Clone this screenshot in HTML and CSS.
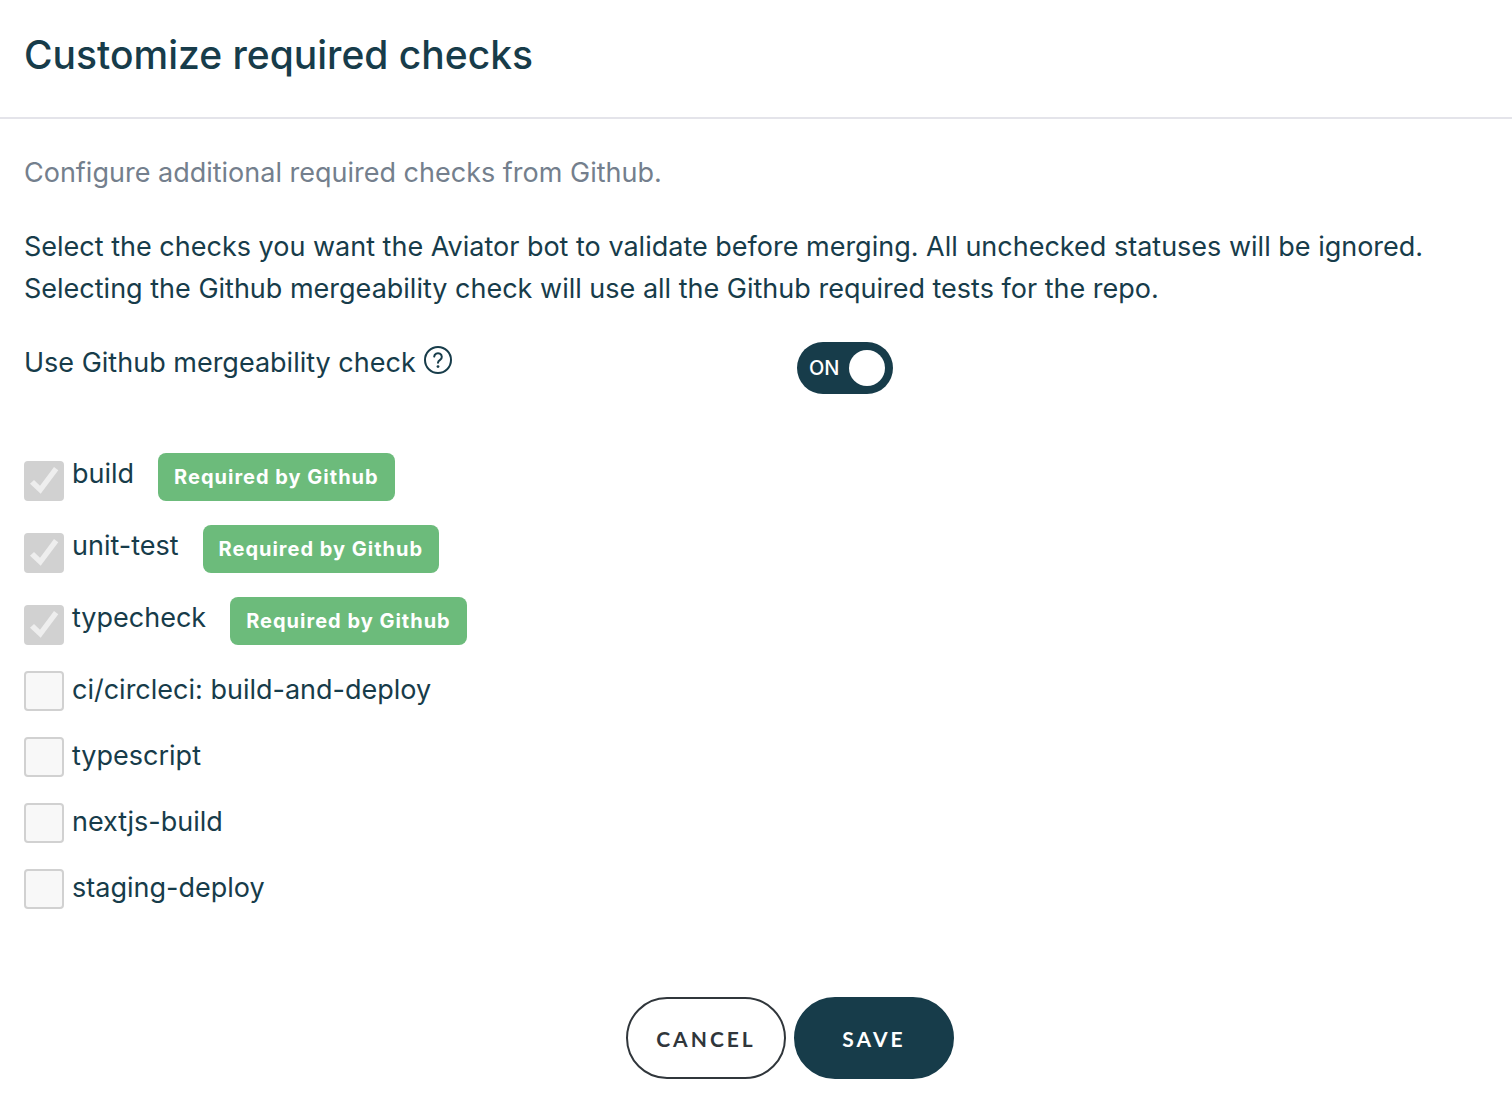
FILE: index.html
```html
<!DOCTYPE html>
<html lang="en">
<head>
<meta charset="utf-8">
<meta name="viewport" content="width=device-width, initial-scale=1">
<title>Customize required checks</title>
<link rel="stylesheet" href="styles.css">
</head>
<body>
<main>
  <header class="header">
    <h1>Customize required checks</h1>
  </header>
  <form class="content">
    <p class="hint">Configure additional required checks from Github.</p>
    <p class="intro">Select the checks you want the Aviator bot to validate before merging. All unchecked statuses will be ignored. Selecting the Github mergeability check will use all the Github required tests for the repo.</p>
    <div class="setting">
      <div class="setting-name">
        <label for="mergeability">Use Github mergeability check</label>
        <svg class="help" viewBox="0 0 28 28" aria-hidden="true">
          <circle cx="14" cy="14" r="13"/>
          <path d="M10.2 10.6a3.8 3.6 0 1 1 5.9 3.2c-1.4.9-2.1 1.5-2.1 3"/>
          <circle class="dot" cx="14" cy="20.6" r="1.4"/>
        </svg>
      </div>
      <label class="switch">
        <input type="checkbox" id="mergeability" checked>
        <span class="switch-text">ON</span>
        <span class="knob"></span>
      </label>
    </div>
    <ul class="checks">
      <li class="required"><input type="checkbox" id="c1" checked disabled><label for="c1">build</label><span class="badge">Required by Github</span></li>
      <li class="required"><input type="checkbox" id="c2" checked disabled><label for="c2">unit-test</label><span class="badge">Required by Github</span></li>
      <li class="required"><input type="checkbox" id="c3" checked disabled><label for="c3">typecheck</label><span class="badge">Required by Github</span></li>
      <li><input type="checkbox" id="c4"><label for="c4">ci/circleci: build-and-deploy</label></li>
      <li><input type="checkbox" id="c5"><label for="c5">typescript</label></li>
      <li><input type="checkbox" id="c6"><label for="c6">nextjs-build</label></li>
      <li><input type="checkbox" id="c7"><label for="c7">staging-deploy</label></li>
    </ul>
    <div class="actions">
      <button type="button" class="cancel">CANCEL</button>
      <button type="submit" class="save">SAVE</button>
    </div>
  </form>
</main>
</body>
</html>
```

FILE: styles.css
```css
* { box-sizing: border-box; }
body {
  margin: 0;
  background: #fff;
  color: #173c4a;
  font: 27px/42px Inter, sans-serif;
}
h1, p, ul { margin: 0; padding: 0; }
.header {
  padding: 24px 24px 32px;
  border-bottom: 2px solid #e4e4ea;
}
h1 {
  font-size: 39px;
  line-height: 61px;
  font-weight: 500;
}
.content { padding: 33px 24px 21px; }
.hint { color: #747f8d; margin-bottom: 32px; }
.intro { margin-bottom: 32px; }
.setting {
  display: grid;
  grid-template-columns: 773fr 691fr;
  align-items: start;
}
.setting-name { display: flex; gap: 8px; }
.help {
  width: 28px;
  height: 28px;
  margin-top: 4px;
  fill: none;
  stroke: currentColor;
  stroke-width: 2;
  stroke-linecap: round;
}
.help .dot { fill: currentColor; stroke: none; }
.switch {
  display: flex;
  align-items: center;
  justify-content: space-between;
  width: 96px;
  height: 52px;
  padding: 0 8px 0 12px;
  border-radius: 26px;
  background: #173c4a;
  color: #fff;
}
.switch input { position: absolute; opacity: 0; }
.switch-text { font-size: 20px; font-weight: 500; }
.knob { width: 36px; height: 36px; border-radius: 50%; background: #fff; }
.checks {
  display: grid;
  gap: 24px;
  margin-top: 59px;
  list-style: none;
}
.checks li { display: flex; align-items: flex-start; gap: 8px; }
.checks input {
  appearance: none;
  flex: none;
  width: 40px;
  height: 40px;
  margin: 2px 0 0;
  border: 2px solid #d1d1d1;
  border-radius: 4px;
  background: #f8f8f8;
}
.checks .required input {
  margin-top: 8px;
  background: #d1d1d1 url("data:image/svg+xml,%3Csvg xmlns='http://www.w3.org/2000/svg' viewBox='0 0 40 40'%3E%3Cpath d='M6 22.7 10 19l6 5.7L30 6l4.3 3.3-17.6 23.4z' fill='%23eee'/%3E%3C/svg%3E") center / 40px border-box;
}
.badge {
  margin-left: 16px;
  padding: 0 16px;
  border-radius: 8px;
  background: #6cbb7b;
  color: #fff;
  font-size: 20px;
  line-height: 48px;
  font-weight: 700;
  letter-spacing: 1px;
}
.actions { display: flex; justify-content: center; gap: 8px; margin: 88px 0 0 68px; }
.actions button {
  width: 160px;
  height: 82px;
  border: 2px solid #30363b;
  border-radius: 41px;
  background: #fff;
  color: #30363b;
  font: 700 21px Lato, sans-serif;
  letter-spacing: 3px;
}
.actions .save { border-color: #173c4a; background: #173c4a; color: #fff; }
```
